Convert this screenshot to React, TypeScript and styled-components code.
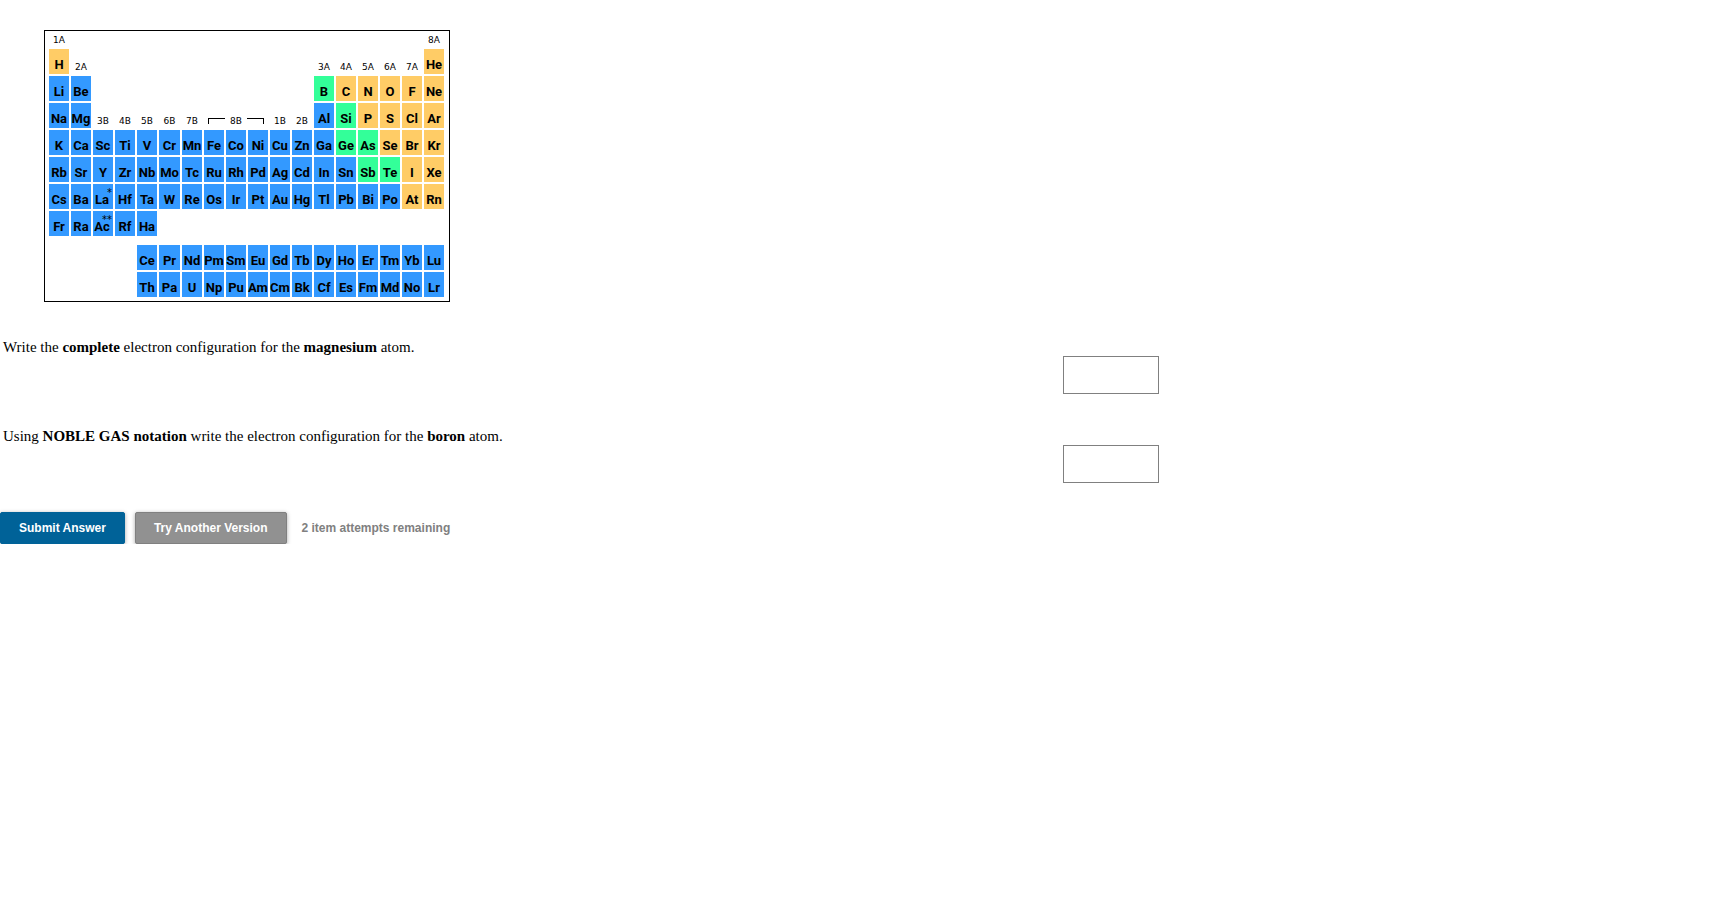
import React from "react";
import styled, { createGlobalStyle } from "styled-components";

const GlobalStyle = createGlobalStyle`
  *, *::before, *::after { box-sizing: border-box; }
  body {
    margin: 0;
    background: #fff;
    color: #000;
    font-family: "Liberation Serif", "Times New Roman", serif;
    font-size: 15px;
    line-height: 18px;
  }
`;

type Kind = "metal" | "metalloid" | "nonmetal";

const fills: Record<Kind, string> = {
  metal: "#3399ff",
  metalloid: "#33ff99",
  nonmetal: "#ffcc66",
};

const METALLOIDS = new Set(["B", "Si", "Ge", "As", "Sb", "Te"]);
const NONMETALS = new Set(
  "H He C N O F Ne P S Cl Ar Se Br Kr I Xe At Rn".split(" ")
);

const kindOf = (symbol: string): Kind =>
  METALLOIDS.has(symbol) ? "metalloid" : NONMETALS.has(symbol) ? "nonmetal" : "metal";

const NOTES: Record<string, string> = { La: "*", Ac: "**" };

/* "." is an empty place, "[8B]" spans the three group 8B columns. */
const ROWS = [
  "1A . . . . . . . . . . . . . . . . 8A",
  "H 2A . . . . . . . . . . 3A 4A 5A 6A 7A He",
  "Li Be . . . . . . . . . . B C N O F Ne",
  "Na Mg 3B 4B 5B 6B 7B [8B] 1B 2B Al Si P S Cl Ar",
  "K Ca Sc Ti V Cr Mn Fe Co Ni Cu Zn Ga Ge As Se Br Kr",
  "Rb Sr Y Zr Nb Mo Tc Ru Rh Pd Ag Cd In Sn Sb Te I Xe",
  "Cs Ba La Hf Ta W Re Os Ir Pt Au Hg Tl Pb Bi Po At Rn",
  "Fr Ra Ac Rf Ha . . . . . . . . . . . . .",
  "",
  ". . . . Ce Pr Nd Pm Sm Eu Gd Tb Dy Ho Er Tm Yb Lu",
  ". . . . Th Pa U Np Pu Am Cm Bk Cf Es Fm Md No Lr",
].map((row) => row.split(" ").filter(Boolean));

const Page = styled.main`
  padding: 30px 0 0;
`;

const Frame = styled.div`
  width: fit-content;
  margin-left: 44px;
  padding: 0 3px 2px 2px;
  border: 1px solid #000;
`;

const Elements = styled.table`
  width: 399px;
  table-layout: fixed;
  border-collapse: separate;
  border-spacing: 2px;
`;

const Column = styled.col<{ $wide: boolean }>`
  width: ${(p) => (p.$wide ? 21 : 20)}px;
`;

const Period = styled.tr<{ $height: number }>`
  height: ${(p) => p.$height}px;
`;

const Empty = styled.td`
  padding: 0;
`;

const Element = styled.td<{ $kind: Kind }>`
  position: relative;
  padding: 7px 0 0;
  background: ${(p) => fills[p.$kind]};
  font-family: Roboto, "Liberation Sans", sans-serif;
  font-size: 13px;
  font-weight: 700;
  line-height: 18px;
  text-align: center;
  vertical-align: top;
  white-space: nowrap;
`;

const Symbol = styled.span<{ $noted: boolean }>`
  display: flex;
  justify-content: center;
  padding-right: ${(p) => (p.$noted ? 2 : 0)}px;
`;

const Note = styled.sup`
  position: absolute;
  top: 4px;
  right: 1px;
  font-family: "DejaVu Sans", Verdana, sans-serif;
  font-size: 10px;
  font-weight: 400;
  line-height: 10px;
`;

const Group = styled.th`
  padding: 0;
  font-family: "DejaVu Sans", Verdana, sans-serif;
  font-size: 9px;
  font-weight: 400;
  line-height: 14px;
  text-align: center;
  vertical-align: bottom;
`;

const Bracket = styled.div`
  display: flex;
  align-items: center;
  justify-content: space-between;
  padding: 0 4px;
`;

const Arm = styled.span<{ $side: "left" | "right" }>`
  width: 17px;
  height: 6px;
  border-top: 1px solid #000;
  border-${(p) => p.$side}: 1px solid #000;
`;

const Questions = styled.div`
  margin-top: 36px;
`;

const Question = styled.div`
  display: grid;
  grid-template-columns: 8fr 5fr;
  min-height: 89px;
`;

const Prompt = styled.label`
  padding-left: 3px;
`;

const Answer = styled.input`
  display: block;
  width: 96px;
  height: 38px;
  margin: 18px 0 0 4px;
  padding: 4px;
  border: 1px solid #808080;
  border-radius: 0;
  background: #fff;
  font: inherit;
`;

const Actions = styled.div`
  display: flex;
  align-items: center;
  margin-top: -4px;
  font-family: "Liberation Sans", Arial, sans-serif;
  font-size: 12px;
  font-weight: 700;
`;

const Button = styled.button<{ $tone: "primary" | "neutral" }>`
  height: 32px;
  margin-right: 10px;
  padding: 0 18px;
  border: 1px solid ${(p) => (p.$tone === "primary" ? "#006298" : "#808080")};
  border-radius: 2px;
  background: ${(p) => (p.$tone === "primary" ? "#006298" : "#919191")};
  box-shadow: 0 1px 4px rgba(0, 0, 0, 0.35);
  color: #fff;
  font: inherit;
  cursor: pointer;
`;

const Attempts = styled.span`
  margin-left: 5px;
  color: #808080;
`;

function Cell({ text }: { text: string }) {
  if (text === ".") return <Empty />;
  if (text === "[8B]") {
    return (
      <Group colSpan={3}>
        <Bracket>
          <Arm $side="left" />
          8B
          <Arm $side="right" />
        </Bracket>
      </Group>
    );
  }
  if (/^\d/.test(text)) return <Group>{text}</Group>;
  return (
    <Element $kind={kindOf(text)}>
      <Symbol $noted={text in NOTES}>{text}</Symbol>
      {NOTES[text] && <Note>{NOTES[text]}</Note>}
    </Element>
  );
}

const rowHeight = (index: number) => (index === 0 ? 14 : ROWS[index].length ? 25 : 5);

export default function App() {
  return (
    <Page>
      <GlobalStyle />
      <Frame>
        <Elements aria-label="Periodic table">
          <colgroup>
            {Array.from({ length: 18 }, (_, i) => (
              <Column key={i} $wide={i === 5} />
            ))}
          </colgroup>
          <tbody>
            {ROWS.map((row, r) => (
              <Period key={r} $height={rowHeight(r)}>
                {row.length ? (
                  row.map((text, c) => <Cell key={c} text={text} />)
                ) : (
                  <Empty colSpan={18} />
                )}
              </Period>
            ))}
          </tbody>
        </Elements>
      </Frame>
      <Questions>
        <Question>
          <Prompt htmlFor="magnesium">
            Write the <b>complete</b> electron configuration for the <b>magnesium</b> atom.
          </Prompt>
          <div>
            <Answer id="magnesium" type="text" />
          </div>
        </Question>
        <Question>
          <Prompt htmlFor="boron">
            Using <b>NOBLE GAS notation</b> write the electron configuration for the{" "}
            <b>boron</b> atom.
          </Prompt>
          <div>
            <Answer id="boron" type="text" />
          </div>
        </Question>
      </Questions>
      <Actions>
        <Button type="button" $tone="primary">Submit Answer</Button>
        <Button type="button" $tone="neutral">Try Another Version</Button>
        <Attempts>2 item attempts remaining</Attempts>
      </Actions>
    </Page>
  );
}
